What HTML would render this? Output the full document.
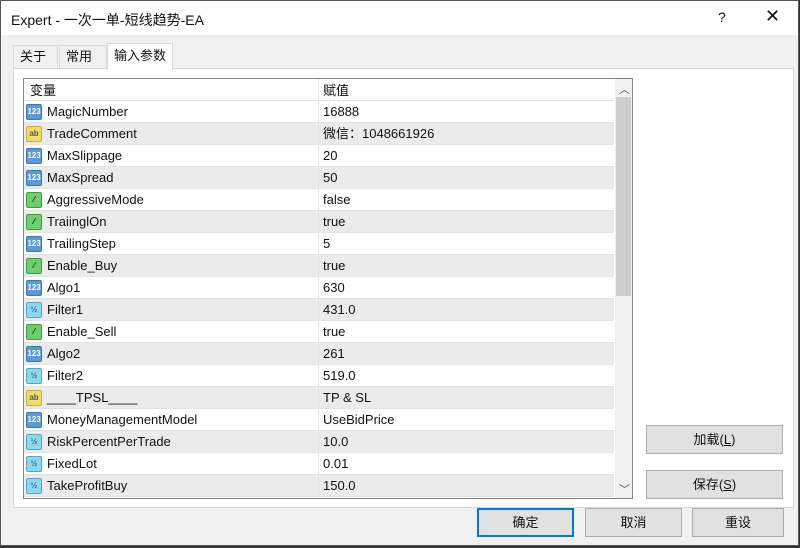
<!DOCTYPE html><html><head><meta charset="utf-8"><style>
*{box-sizing:border-box;margin:0;padding:0}
body{width:800px;height:548px;overflow:hidden;background:#333;font-family:"Liberation Sans","Noto Sans CJK SC",sans-serif;font-size:13px;color:#111}
.win{position:absolute;left:0;top:0;width:799px;height:546px;background:#f0f0f0;border:1px solid #555}
.title{position:absolute;left:0;top:0;width:797px;height:34px;background:#fff}
.title span{position:absolute;left:10px;top:9px;font-size:14px}
.tab{position:absolute;top:44px;height:24px;font-size:13px;line-height:22px;padding:0 0 0 6px;border:1px solid #d9d9d9;border-bottom:none;background:#f0f0f0}
.panel{position:absolute;left:12px;top:67px;width:781px;height:440px;background:#fff;border:1px solid #d9d9d9}
.tbl{position:absolute;left:22px;top:77px;width:610px;height:421px;border:1px solid #828790;background:#fff;overflow:hidden}
.row{position:absolute;left:0;width:590px;height:22px;border-bottom:1px solid #e3e3e3;line-height:21px}
.row.g{background:#ebebeb}
.row .n{position:absolute;left:23px;top:0}
.row .v{position:absolute;left:299px;top:0}
.row .d{position:absolute;left:294px;top:0;width:1px;height:22px;background:#e3e3e3}
.ic{position:absolute;left:2px;top:3px;width:16px;height:16px;border-radius:2px;font-size:8px;font-weight:bold;text-align:center;line-height:14px}
.i1{background:#5b9bd5;color:#fff;border:1px solid #3a78b5}
.i2{background:#f0dc6a;color:#555;border:1px solid #c9b030}
.i3{background:#6cce6c;color:#222;border:1px solid #3aa03a}
.i4{background:#8fd8ec;color:#2a6f8a;border:1px solid #4aaccc}
.sb{position:absolute;left:591px;top:0;width:17px;height:419px;background:#f0f0f0}
.btn{position:absolute;background:#e1e1e1;border:1px solid #adadad;text-align:center;line-height:27px;font-size:13px}
</style></head><body><div class="win">
<div class="title"><span>Expert - 一次一单-短线趋势-EA</span><span style="left:717px;top:8px">?</span><span style="left:764px;top:5px;font-size:18px">✕</span></div>
<div class="tab" style="left:12px;width:45px">关于</div>
<div class="tab" style="left:58px;width:48px">常用</div>
<div class="panel"></div>
<div class="tab" style="left:106px;top:42px;width:66px;height:27px;background:#fff;line-height:24px">输入参数</div>
<div class="tbl">
<div class="row" style="top:0;height:22px"><span class="n" style="left:6px;top:1px">变量</span><span class="v" style="top:1px">赋值</span><span class="d"></span></div>
<div class="row" style="top:22px"><span class="ic i1">123</span><span class="n">MagicNumber</span><span class="d"></span><span class="v">16888</span></div>
<div class="row g" style="top:44px"><span class="ic i2">ab</span><span class="n">TradeComment</span><span class="d"></span><span class="v" style="top:0">微信：1048661926</span></div>
<div class="row" style="top:66px"><span class="ic i1">123</span><span class="n">MaxSlippage</span><span class="d"></span><span class="v">20</span></div>
<div class="row g" style="top:88px"><span class="ic i1">123</span><span class="n">MaxSpread</span><span class="d"></span><span class="v">50</span></div>
<div class="row" style="top:110px"><span class="ic i3">⁄</span><span class="n">AggressiveMode</span><span class="d"></span><span class="v">false</span></div>
<div class="row g" style="top:132px"><span class="ic i3">⁄</span><span class="n">TraiinglOn</span><span class="d"></span><span class="v">true</span></div>
<div class="row" style="top:154px"><span class="ic i1">123</span><span class="n">TrailingStep</span><span class="d"></span><span class="v">5</span></div>
<div class="row g" style="top:176px"><span class="ic i3">⁄</span><span class="n">Enable_Buy</span><span class="d"></span><span class="v">true</span></div>
<div class="row" style="top:198px"><span class="ic i1">123</span><span class="n">Algo1</span><span class="d"></span><span class="v">630</span></div>
<div class="row g" style="top:220px"><span class="ic i4">½</span><span class="n">Filter1</span><span class="d"></span><span class="v">431.0</span></div>
<div class="row" style="top:242px"><span class="ic i3">⁄</span><span class="n">Enable_Sell</span><span class="d"></span><span class="v">true</span></div>
<div class="row g" style="top:264px"><span class="ic i1">123</span><span class="n">Algo2</span><span class="d"></span><span class="v">261</span></div>
<div class="row" style="top:286px"><span class="ic i4">½</span><span class="n">Filter2</span><span class="d"></span><span class="v">519.0</span></div>
<div class="row g" style="top:308px"><span class="ic i2">ab</span><span class="n">____TPSL____</span><span class="d"></span><span class="v">TP &amp; SL</span></div>
<div class="row" style="top:330px"><span class="ic i1">123</span><span class="n">MoneyManagementModel</span><span class="d"></span><span class="v">UseBidPrice</span></div>
<div class="row g" style="top:352px"><span class="ic i4">½</span><span class="n">RiskPercentPerTrade</span><span class="d"></span><span class="v">10.0</span></div>
<div class="row" style="top:374px"><span class="ic i4">½</span><span class="n">FixedLot</span><span class="d"></span><span class="v">0.01</span></div>
<div class="row g" style="top:396px"><span class="ic i4">½</span><span class="n">TakeProfitBuy</span><span class="d"></span><span class="v">150.0</span></div>
<div class="sb"><div style="position:absolute;left:4px;top:2px;font-size:11px;color:#555">︿</div><div style="position:absolute;left:1px;top:18px;width:15px;height:199px;background:#cdcdcd"></div><div style="position:absolute;left:4px;top:402px;font-size:11px;color:#555">﹀</div></div>
</div>
<div class="btn" style="left:645px;top:424px;width:137px;height:29px">加载(<u>L</u>)</div>
<div class="btn" style="left:645px;top:469px;width:137px;height:29px">保存(<u>S</u>)</div>
<div class="btn" style="left:476px;top:507px;width:97px;height:29px;border:2px solid #0078d7;line-height:25px">确定</div>
<div class="btn" style="left:584px;top:507px;width:97px;height:29px">取消</div>
<div class="btn" style="left:691px;top:507px;width:92px;height:29px">重设</div>
</div></body></html>
